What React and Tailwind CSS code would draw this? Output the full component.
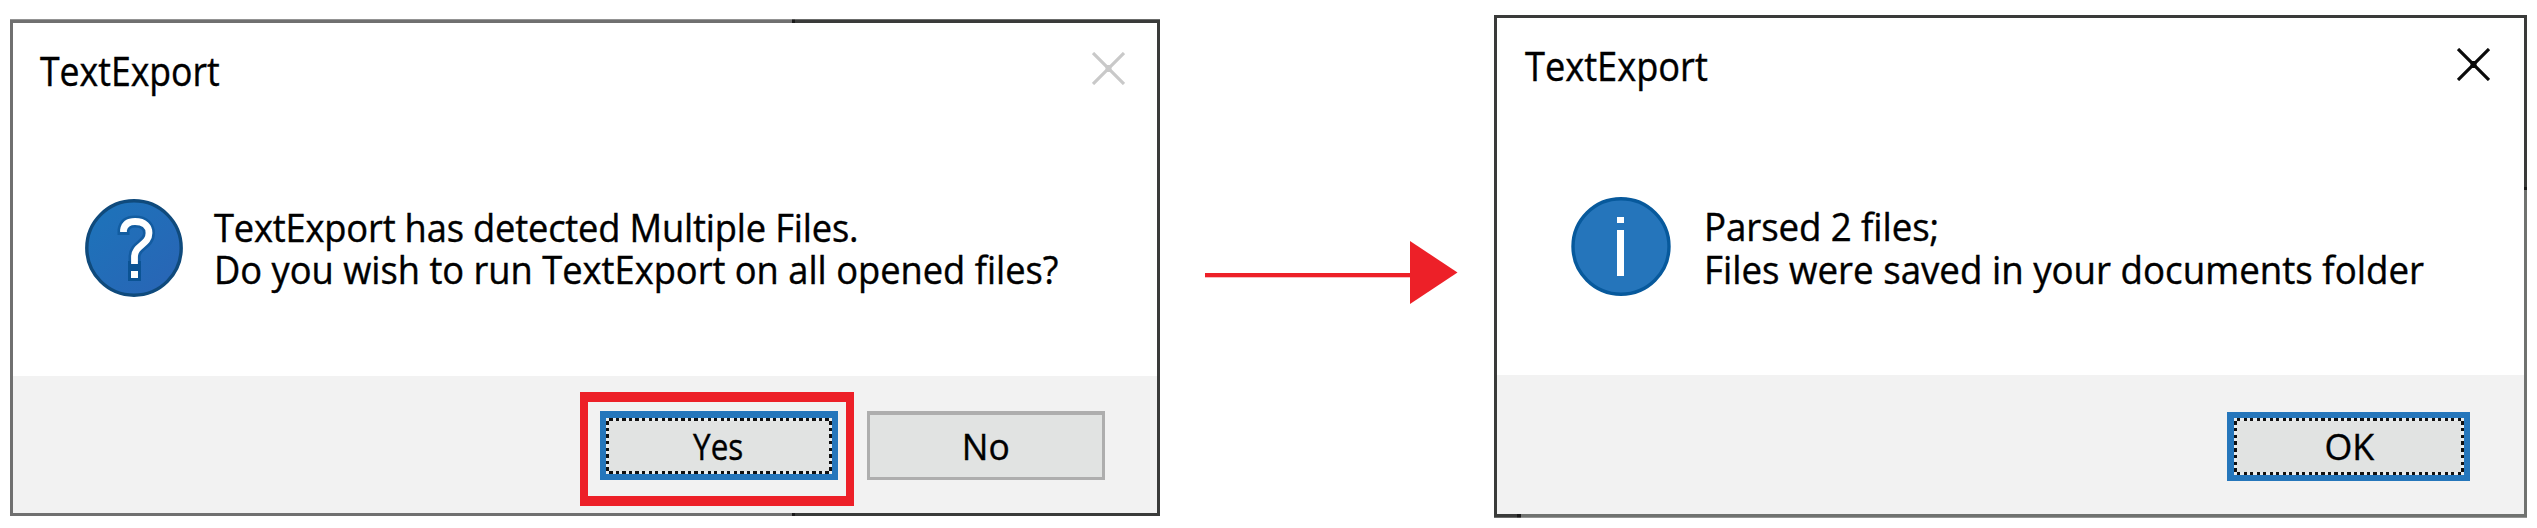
function CloseIcon({ className }) {
  return (
    <svg viewBox="0 0 33 33" preserveAspectRatio="none" className={className} fill="none" stroke="currentColor">
      <path d="M1 1L32 32M32 1L1 32" strokeWidth="3.2" />
      <rect x="13.5" y="13" width="6" height="7" fill="currentColor" stroke="none" />
    </svg>
  );
}

function QuestionIcon() {
  return (
    <svg viewBox="0 0 98 98" className="h-[98px] w-[98px] shrink-0">
      <defs>
        <linearGradient id="q" x1="0" y1="0" x2="1" y2="1">
          <stop offset="0" stopColor="#1c74ba" />
          <stop offset="1" stopColor="#2a64b5" />
        </linearGradient>
      </defs>
      <circle cx="49" cy="49" r="47.2" fill="url(#q)" stroke="#0f4a7c" strokeWidth="3.4" />
      <g fill="none" stroke="#0b5394">
        <path d="M38.5 36V31Q40 22.5 50 22.5C60 22.5 64 28 64 34C64 46 49.5 46 49.5 58V64" strokeWidth="12" opacity="0.65" />
        <path d="M49.5 62V82" strokeWidth="13" />
      </g>
      <path d="M38.5 33V31Q40 22.5 50 22.5C60 22.5 64 28 64 34C64 46 49.5 46 49.5 58V65" fill="none" stroke="#fff" strokeWidth="6.8" />
      <rect x="46" y="72" width="7" height="7" fill="#fff" />
    </svg>
  );
}

function InfoIcon() {
  return (
    <svg viewBox="0 0 100 99" className="h-[99px] w-[100px] shrink-0">
      <ellipse cx="50" cy="49.5" rx="48" ry="47.7" fill="#2575bb" stroke="#07599c" strokeWidth="3.4" />
      <rect x="46" y="20" width="7" height="6" fill="#fff" />
      <rect x="46" y="33" width="7" height="46" fill="#fff" />
    </svg>
  );
}

function FocusDots({ cols, className }) {
  return (
    <svg viewBox={`0 0 ${cols} 17`} preserveAspectRatio="none" shapeRendering="crispEdges" className={className}>
      <rect width={cols} height="17" fill="#e8ebec" />
      <rect x="1" y="1" width={cols - 2} height="15" fill="#e1e3e2" />
      <path
        d={`M1 .5H${cols - 1}M1 16.5H${cols - 1}M.5 1V16M${cols - 0.5} 1V16`}
        fill="none"
        stroke="#111"
        strokeWidth="1"
        strokeDasharray="1 1"
      />
    </svg>
  );
}

export default function App() {
  return (
    <div className="flex h-[528px] w-[2537px] items-start overflow-hidden bg-white font-['Open_Sans','Noto_Sans',sans-serif] text-black [-webkit-text-stroke:0.4px_#000]">
      <section className="relative mt-[19px] ml-[10px] flex h-[497px] w-[1150px] shrink-0 flex-col border-x-[3px] border-t-[4px] border-b-[3px] border-[#707070] border-r-[#3a3b3a]">
        <span className="absolute -top-1 -right-[3px] h-1 w-[368px] bg-[#3a3b3a]" />
        <span className="absolute -right-[3px] -bottom-[3px] h-[3px] w-[368px] bg-[#3a3b3a]" />
        <span className="absolute -top-1 right-[362px] h-1 w-[3px] bg-[#1a1a1a]" />
        <span className="absolute right-[362px] -bottom-[3px] h-[3px] w-[3px] bg-[#1a1a1a]" />
        <span className="absolute -top-1 -right-[3px] -left-[3px] h-px bg-white/25" />

        <header className="flex h-[176px] shrink-0 items-start justify-between pt-[23px] pr-8 pl-[27px]">
          <h2 className="origin-left scale-x-[0.868] text-[41px] leading-[48px] whitespace-nowrap">TextExport</h2>
          <CloseIcon className="mt-[6px] h-[33px] w-[33px] text-[#c9c9c9]" />
        </header>
        <div className="flex h-[177px] shrink-0 items-start pl-[72px]">
          <QuestionIcon />
          <p className="mt-[8px] ml-[31px] origin-left scale-x-[0.967] text-[37.5px] leading-[42px] whitespace-nowrap">
            <span className="tracking-[-0.18px]">TextExport has detected Multiple Files.</span>
            <br />
            Do you wish to run TextExport on all opened files?
          </p>
        </div>
        <footer className="flex grow items-start justify-end gap-[29px] bg-[#f2f2f2] pt-[35px] pr-[52px]">
          <div className="relative">
            <button className="relative flex h-[69px] w-[238px] items-center justify-center border-x-[6px] border-t-[7px] border-b-[6px] border-[#2576bb] bg-[#e1e3e2] text-[36.5px] leading-none">
              <FocusDots cols={69} className="absolute inset-0 h-full w-full" />
              <span className="relative -left-px scale-x-[0.86]">Yes</span>
            </button>
            <span className="absolute -top-[19px] -left-5 h-[114px] w-[274px] border-x-8 border-y-[10px] border-[#ed2028]" />
          </div>
          <button className="flex h-[69px] w-[238px] items-center justify-center border-x-[3px] border-t-[4px] border-b-[3px] border-[#aeaeae] bg-[#e1e3e2] text-[36.5px] leading-none">
            <span className="scale-x-[0.97]">No</span>
          </button>
        </footer>
      </section>

      <svg viewBox="0 0 253 64" className="mt-[241px] ml-[45px] h-16 w-[253px] shrink-0">
        <rect y="32" width="206" height="4.3" fill="#ed2028" />
        <path d="M205 0L252.5 31.5L205 63Z" fill="#ed2028" />
      </svg>

      <section className="relative mt-[15px] ml-[36px] flex h-[503px] w-[1033px] shrink-0 flex-col border-x-[3px] border-t-[3px] border-b-[4px] border-[#3a3b3a] border-b-[#707270]">
        <span className="absolute top-[172px] -right-[3px] -bottom-1 w-[3px] bg-[#707270]" />
        <span className="absolute top-[169px] -right-[3px] h-[3px] w-[3px] bg-[#1a1a1a]" />
        <span className="absolute -bottom-1 -left-[3px] h-1 w-[23px] bg-[#3a3b3a]" />
        <span className="absolute -bottom-1 left-5 h-1 w-1 bg-[#1a1a1a]" />
        <span className="absolute -right-[3px] -bottom-1 -left-[3px] h-px bg-white/25" />

        <header className="flex h-[179px] shrink-0 items-start justify-between pt-[23px] pr-[34px] pl-[28px]">
          <h2 className="origin-left scale-x-[0.883] text-[41px] leading-[48px] whitespace-nowrap">TextExport</h2>
          <CloseIcon className="mt-[7px] h-[33px] w-[33px] text-[#0a0a0a]" />
        </header>
        <div className="flex h-[178px] shrink-0 items-start pl-[74px]">
          <InfoIcon />
          <p className="mt-[8px] ml-[33px] origin-left scale-x-[0.978] text-[37.5px] leading-[43px] whitespace-nowrap">
            <span className="tracking-[-0.1px]">Parsed 2 files;</span>
            <br />
            Files were saved in your documents folder
          </p>
        </div>
        <footer className="flex grow items-start justify-end bg-[#f2f2f2] pt-[37px] pr-[54px]">
          <button className="relative flex h-[69px] w-[243px] items-center justify-center border-x-[7px] border-y-[6px] border-r-[6px] border-[#2576bb] bg-[#e1e3e2] text-[36.5px] leading-none">
            <FocusDots cols={71} className="absolute inset-0 h-full w-full" />
            <span className="relative scale-x-[0.98]">OK</span>
          </button>
        </footer>
      </section>
    </div>
  );
}
